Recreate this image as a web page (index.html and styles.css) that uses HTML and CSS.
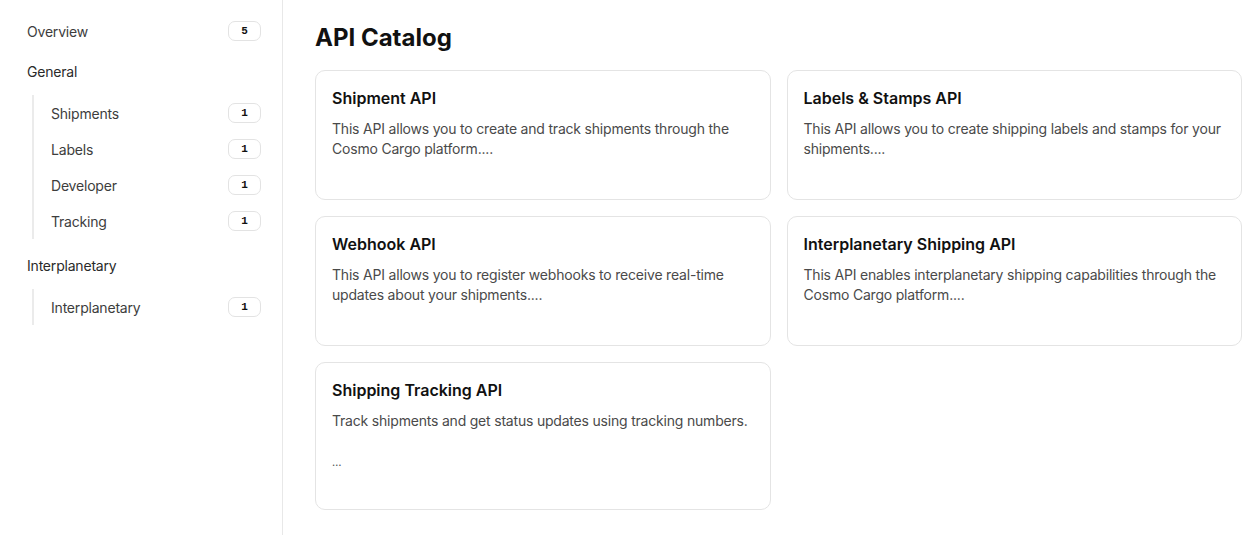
FILE: index.html
```html
<!DOCTYPE html>
<html lang="en">
<head>
    <meta charset="UTF-8">
    <meta name="viewport" content="width=device-width, initial-scale=1.0">
    <title>API Catalog</title>
    <link rel="stylesheet" href="styles.css">
</head>
<body>
    <aside class="sidebar">
        <a class="nav-item" href="#">
            <span>Overview</span>
            <span class="badge">5</span>
        </a>

        <div class="nav-heading">General</div>
        <div class="nav-group">
            <a class="nav-item" href="#"><span>Shipments</span><span class="badge">1</span></a>
            <a class="nav-item" href="#"><span>Labels</span><span class="badge">1</span></a>
            <a class="nav-item" href="#"><span>Developer</span><span class="badge">1</span></a>
            <a class="nav-item" href="#"><span>Tracking</span><span class="badge">1</span></a>
        </div>

        <div class="nav-heading">Interplanetary</div>
        <div class="nav-group">
            <a class="nav-item" href="#"><span>Interplanetary</span><span class="badge">1</span></a>
        </div>
    </aside>

    <main class="main">
        <h1>API Catalog</h1>
        <div class="catalog">
            <a class="card" href="#">
                <h3>Shipment API</h3>
                <p>This API allows you to create and track shipments through the Cosmo Cargo platform....</p>
            </a>
            <a class="card" href="#">
                <h3>Labels &amp; Stamps API</h3>
                <p>This API allows you to create shipping labels and stamps for your shipments....</p>
            </a>
            <a class="card" href="#">
                <h3>Webhook API</h3>
                <p>This API allows you to register webhooks to receive real-time updates about your shipments....</p>
            </a>
            <a class="card" href="#">
                <h3>Interplanetary Shipping API</h3>
                <p>This API enables interplanetary shipping capabilities through the Cosmo Cargo platform....</p>
            </a>
            <a class="card" href="#">
                <h3>Shipping Tracking API</h3>
                <p class="multi">Track shipments and get status updates using tracking numbers.

<span class="ellipsis">…</span></p>
            </a>
        </div>
    </main>
</body>
</html>
```

FILE: styles.css
```css
body {
    font-family: Inter, "Noto Sans", sans-serif;
    margin: 0;
    display: flex;
    min-height: 100vh;
    color: #1a1a1a;
    background: #fff;
}
a {
    color: inherit;
    text-decoration: none;
}
.sidebar {
    width: 246px;
    flex-shrink: 0;
    padding: 13px 21px 0 15px;
    border-right: 1px solid #e8e8e8;
}
.nav-item {
    display: flex;
    align-items: center;
    justify-content: space-between;
    height: 36px;
    padding-left: 12px;
    font-size: 14px;
    letter-spacing: -0.2px;
    color: #3d3d3d;
}
.nav-heading {
    height: 36px;
    line-height: 36px;
    margin: 5px 0;
    padding-left: 12px;
    font-size: 14px;
    letter-spacing: -0.2px;
    color: #2a2a2a;
}
.nav-group {
    margin: 0 0 9px 17px;
    padding-left: 5px;
    border-left: 2px solid #ebebeb;
}
.nav-group .nav-item {
    padding-left: 12px;
}
.badge {
    box-sizing: border-box;
    width: 33px;
    height: 20px;
    line-height: 18px;
    text-align: center;
    border: 1px solid #e3e3e3;
    border-radius: 7px;
    font-family: "Liberation Mono", monospace;
    font-size: 11px;
    font-weight: bold;
    letter-spacing: 0;
    color: #111;
}
.main {
    flex: 1;
    padding: 22px 17px 0 32px;
}
h1 {
    margin: 0 0 16px;
    font-size: 24px;
    line-height: 32px;
    font-weight: 700;
    color: #111;
}
.catalog {
    display: grid;
    grid-template-columns: 1fr 1fr;
    gap: 16px;
    align-items: start;
}
.card {
    display: block;
    border: 1px solid #e4e4e4;
    border-radius: 10px;
    padding: 15px 16px 40px;
}
.card h3 {
    margin: 0 0 9px;
    font-size: 16px;
    line-height: 24px;
    font-weight: 600;
    color: #111;
}
.card p {
    margin: 0;
    font-size: 14px;
    line-height: 20px;
    letter-spacing: -0.2px;
    color: #4a4a4a;
}
.card p.multi {
    white-space: pre-line;
}
.card:has(.multi) {
    padding-bottom: 37px;
}
.ellipsis {
    font-size: 11px;
    color: #555;
}
```
